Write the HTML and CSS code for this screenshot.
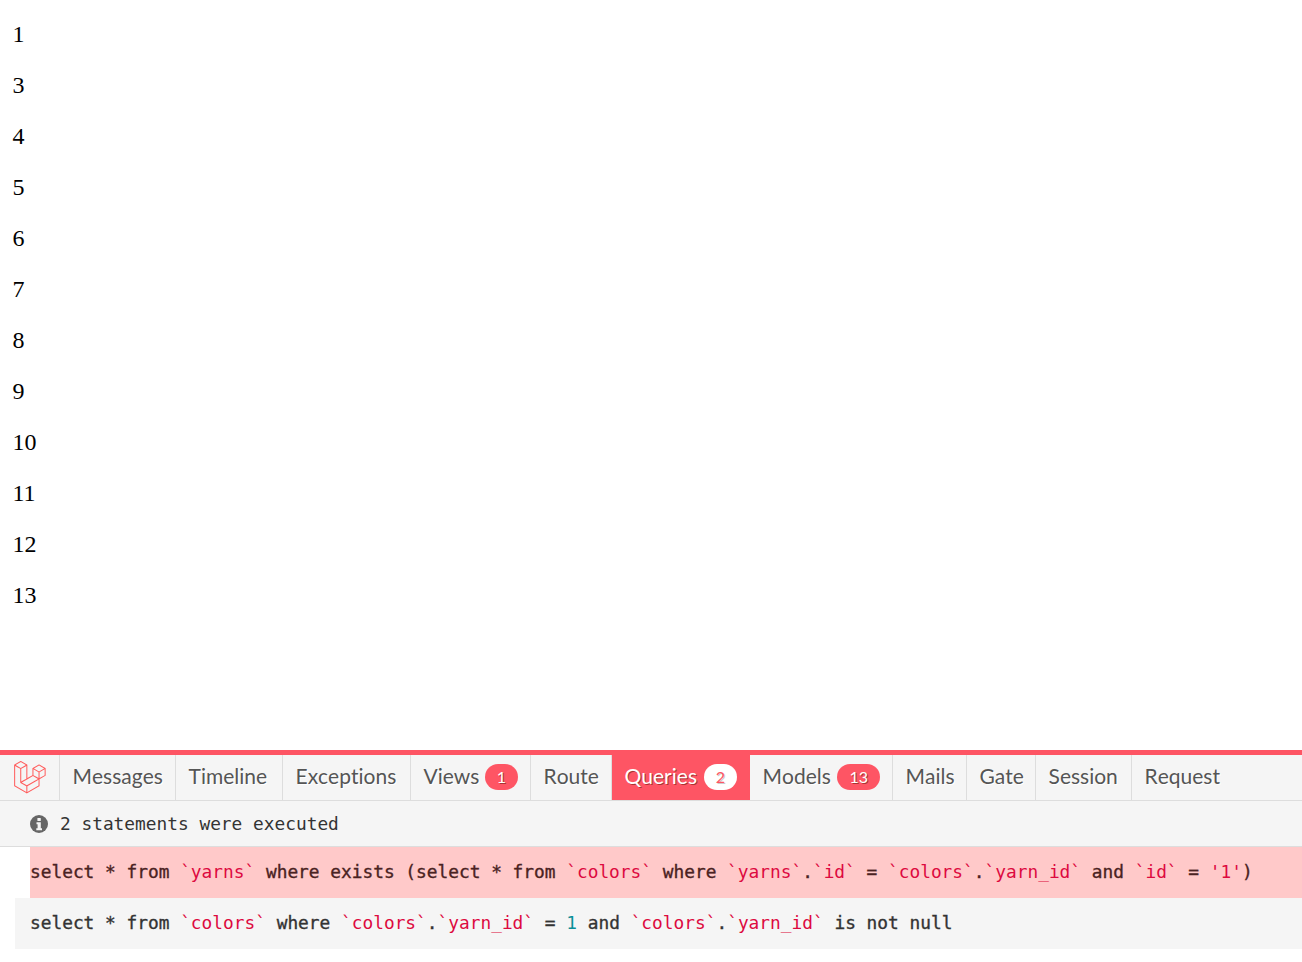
FILE: index.html
```html
<!DOCTYPE html>
<html lang="en">
<head>
<meta charset="utf-8">
<title>Debug bar</title>
<link rel="stylesheet" href="styles.css">
</head>
<body>
<main class="list">
  <p>1</p><p>3</p><p>4</p><p>5</p><p>6</p><p>7</p><p>8</p><p>9</p><p>10</p><p>11</p><p>12</p><p>13</p>
</main>
<section class="debugbar">
  <nav class="tabs">
    <a class="tab logo">
      <svg class="mark" width="32" height="33" viewBox="0 0 50 52"><path d="M49.626 11.564a.809.809 0 0 1 .028.209v10.972a.8.8 0 0 1-.402.694l-9.209 5.302V39.25c0 .286-.152.55-.4.694L20.42 51.01c-.044.025-.092.041-.14.058-.018.006-.035.017-.054.022a.805.805 0 0 1-.41 0c-.022-.006-.042-.018-.063-.026-.044-.016-.09-.03-.132-.054L.402 39.944A.801.801 0 0 1 0 39.25V6.334c0-.072.01-.142.028-.21.006-.023.02-.044.028-.067.015-.042.029-.085.051-.124.015-.026.037-.047.055-.071.023-.032.044-.065.071-.093.023-.023.053-.04.079-.06.029-.024.055-.05.088-.069h.001l9.61-5.533a.802.802 0 0 1 .8 0l9.61 5.533h.002c.032.02.059.045.088.068.026.02.055.038.078.06.028.029.048.062.072.094.017.024.04.045.054.071.023.04.036.082.052.124.008.023.022.044.028.068a.809.809 0 0 1 .028.209v20.559l8.008-4.611v-10.51c0-.07.01-.141.028-.208.007-.024.02-.045.028-.068.016-.042.03-.085.052-.124.015-.026.037-.047.054-.071.024-.032.044-.065.072-.093.023-.023.052-.04.078-.06.03-.024.056-.05.088-.069h.001l9.611-5.533a.801.801 0 0 1 .8 0l9.61 5.533c.034.02.06.045.09.068.025.02.054.038.077.06.028.029.048.062.072.094.018.024.04.045.054.071.023.039.036.082.052.124.009.023.022.044.028.068zm-1.574 10.718v-9.124l-3.363 1.936-4.646 2.675v9.124l8.01-4.611zm-9.61 16.505v-9.13l-4.57 2.61-13.05 7.448v9.216l17.62-10.144zM1.602 7.719v31.068L19.22 48.93v-9.214l-9.204-5.209-.003-.002-.004-.002c-.031-.018-.057-.044-.086-.066-.025-.02-.054-.036-.076-.058l-.002-.003c-.026-.025-.044-.056-.066-.084-.02-.027-.044-.05-.06-.078l-.001-.003c-.018-.03-.029-.066-.042-.1-.013-.03-.03-.058-.038-.09v-.001c-.01-.038-.012-.078-.016-.117-.004-.03-.012-.06-.012-.09v-.002-21.481L4.965 9.654 1.602 7.72zm8.81-5.994L2.405 6.334l8.005 4.609 8.006-4.61-8.006-4.608zm4.164 28.764l4.645-2.674V7.719l-3.363 1.936-4.646 2.675v20.096l3.364-1.937zM39.243 7.164l-8.006 4.609 8.006 4.609 8.005-4.61-8.005-4.608zm-.801 10.605l-4.646-2.675-3.363-1.936v9.124l4.645 2.674 3.364 1.937v-9.124zM20.02 38.33l11.743-6.704 5.87-3.35-8-4.606-9.211 5.303-8.395 4.833 7.993 4.524z"/></svg>
    </a>
    <a class="tab">Messages</a>
    <a class="tab">Timeline</a>
    <a class="tab">Exceptions</a>
    <a class="tab has-badge">Views <span class="badge">1</span></a>
    <a class="tab">Route</a>
    <a class="tab has-badge active">Queries <span class="badge">2</span></a>
    <a class="tab has-badge">Models <span class="badge">13</span></a>
    <a class="tab">Mails</a>
    <a class="tab">Gate</a>
    <a class="tab">Session</a>
    <a class="tab last">Request</a>
  </nav>
  <div class="status">
    <svg class="info" width="18" height="18" viewBox="0 0 18 18"><circle cx="9" cy="9" r="9" fill="#666"/><rect x="7.4" y="3" width="3.4" height="3" rx=".6" fill="#f5f5f5"/><path d="M6.5 7.3h4.3v6h1.2v2H6.3v-2h1.3V9.3H6.5z" fill="#f5f5f5"/></svg>
    <span>2 statements were executed</span>
  </div>
  <ul class="queries">
    <li class="query failed">select * from <span class="str">`yarns`</span> where exists (select * from <span class="str">`colors`</span> where <span class="str">`yarns`</span>.<span class="str">`id`</span> = <span class="str">`colors`</span>.<span class="str">`yarn_id`</span> and <span class="str">`id`</span> = <span class="str">'1'</span>)</li>
    <li class="query plain">select * from <span class="str">`colors`</span> where <span class="str">`colors`</span>.<span class="str">`yarn_id`</span> = <span class="num">1</span> and <span class="str">`colors`</span>.<span class="str">`yarn_id`</span> is not null</li>
  </ul>
</section>
</body>
</html>
```
FILE: styles.css
```css
html, body { margin: 0; padding: 0; }
body {
  min-height: 100vh;
  display: flex;
  flex-direction: column;
  background: #fff;
  color: #000;
  font-family: "Liberation Serif", serif;
  font-size: 24px;
}
.list { padding: 21px 12.5px 0; }
.list p { margin: 0 0 24px; line-height: 27px; }
.debugbar { margin-top: auto; border-top: 5px solid #fe5564; background: #fff; padding-bottom: 13px; }
.tabs {
  display: grid;
  grid-template-columns: 60px 116px 107px 128px 120px 81px 138px 143px 74px 69px 96px 1fr;
  height: 45px;
  background: #f5f5f5;
  border-bottom: 1px solid #ddd;
  font-family: Lato, sans-serif;
  font-size: 21px;
  font-kerning: none;
  font-variant-ligatures: none;
  color: #555;
  text-shadow: 1px 1px #fff;
}
.tab {
  display: flex;
  align-items: center;
  padding: 0 12px 5px 12.5px;
  border-right: 1px solid #ddd;
}
.tab.has-badge { justify-content: space-between; }
.tab.logo { padding: 0 13px 0 14px; }
.mark { fill: #ff5c5c; }
.tab.last { border-right: 0; }
.tab.active {
  background: #fe5564;
  color: #fff;
  border-right-color: #fe5564;
  text-shadow: 1px 1px #a33;
}
.badge {
  display: block;
  min-width: 33px;
  box-sizing: border-box;
  height: 26px;
  margin-top: 4px;
  padding: 0 12px;
  border-radius: 13px;
  background: #fe5564;
  color: #fff;
  font-size: 16px;
  line-height: 25px;
  text-align: center;
  text-shadow: 1px 1px #a33;
}
.active .badge { background: #fff; color: #fe5564; text-shadow: 1px 1px #ccc; }
.status {
  display: flex;
  align-items: center;
  gap: 12px;
  height: 45px;
  padding-left: 30px;
  background: #f5f5f5;
  border-bottom: 1px solid #ddd;
  font-family: "DejaVu Sans Mono", monospace;
  font-size: 17.82px;
  color: #333;
}
.queries {
  margin: 0;
  padding: 0;
  list-style: none;
  font-family: "DejaVu Sans Mono", monospace;
  font-size: 17.82px;
  color: #333;
}
.query {
  height: 49px;
  padding-bottom: 2px;
  line-height: 49px;
  white-space: nowrap;
  -webkit-text-stroke: .35px currentColor;
}
.failed { margin-left: 30px; background: #ffc9c9; color: #4a2222; }
.plain { margin-left: 15px; padding-left: 15px; background: #f5f5f5; }
.str { color: #dd0a3f; -webkit-text-stroke: 0; }
.num { color: #0a8f98; -webkit-text-stroke: 0; }
```
